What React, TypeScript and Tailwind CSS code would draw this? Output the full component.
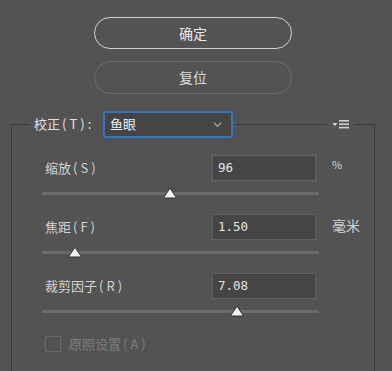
import React from 'react';

const FONT = { fontFamily: '"Noto Sans CJK SC", "Noto Sans", sans-serif' };

const ROWS = [
  { label: '缩放', key: 'S', value: '96', unit: '%', thumb: 170 },
  { label: '焦距', key: 'F', value: '1.50', unit: '毫米', thumb: 75 },
  { label: '裁剪因子', key: 'R', value: '7.08', unit: '', thumb: 237 },
];

// Chinese label + wide-spaced accelerator like "(S)"
const Label: React.FC<{ text: string; k: string; suffix?: string; className?: string }> = ({ text, k, suffix, className }) => (
  <span className={className}>
    {text}
    <span className="ml-[2px] tracking-[3px]">({k})</span>
    {suffix}
  </span>
);

const Slider: React.FC<{ at: number }> = ({ at }) => (
  // track spans x 42..319; at is page x of the thumb centre
  <div className="relative ml-[30px] w-[277px] h-[3px] bg-[#6b6b6b] mt-[11px]">
    <svg
      className="absolute top-[-5px]"
      style={{ left: at - 42 - 7 }}
      width="14"
      height="12"
      viewBox="0 0 14 12"
    >
      <path d="M7 1.2 L12.6 9.5 Q13 11 11.5 11 L2.5 11 Q1 11 1.4 9.5 Z" fill="#f2f2f2" stroke="#2e2e2e" strokeWidth="1" />
    </svg>
  </div>
);

const Row: React.FC<{ label: string; k: string; value: string; unit: string; thumb: number }> = ({ label, k, value, unit, thumb }) => (
  <div className="flex flex-col">
    <div className="flex items-center h-[26px]">
      <Label text={label} k={k} className="w-[200px] pl-[33px] text-[13px] text-[#d4d4d4]" />
      <div className="w-[104px] h-[26px] border border-[#616161] bg-[#454545] flex items-center pl-[5px]">
        <span className="text-[12.5px] text-[#e6e6e6]" style={{ fontFamily: '"DejaVu Sans Mono", monospace' }}>{value}</span>
      </div>
      <span className={`ml-[16px] text-[#d4d4d4] ${unit === '%' ? 'text-[11px] -mt-[8px]' : 'text-[14px] -mt-[3px]'}`}>{unit}</span>
    </div>
    <Slider at={thumb} />
  </div>
);

export default function App() {
  return (
    <div className="w-[392px] h-[371px] bg-[#535353] overflow-hidden flex flex-col" style={FONT}>
      {/* buttons */}
      <div className="flex flex-col ml-[94px] w-[198px] pt-[17px] gap-[12px]">
        <button className="h-[32px] rounded-full border-[1.5px] border-[#cfcfcf] text-[14px] text-[#e8e8e8] flex items-center justify-center">
          确定
        </button>
        <button className="h-[33px] rounded-full border-[1.5px] border-[#6c6c6c] text-[14px] text-[#dcdcdc] flex items-center justify-center">
          复位
        </button>
      </div>

      {/* group header */}
      <div className="flex items-center h-[26px] mt-[17px]">
        <div className="ml-[11px] w-[17px] h-[13px] self-end border-t border-l border-[#3a3a3a]" />
        <Label text="校正" k="T" suffix=":" className="ml-[6px] w-[69px] text-[13px] text-[#e0e0e0] whitespace-nowrap" />
        <div className="w-[130px] h-[27px] rounded-[2px] border-[2px] border-[#3b74b4] bg-[#454545] flex items-center justify-between pl-[5px] pr-[9px] shadow-[0_0_2px_#2f5f99]">
          <span className="text-[13px] text-[#f0f0f0]">鱼眼</span>
          <svg width="9" height="5" viewBox="0 0 9 5">
            <path d="M0.8 0.8 L4.5 4.3 L8.2 0.8" fill="none" stroke="#a8a8a8" strokeWidth="1.2" />
          </svg>
        </div>
        <div className="flex-1 ml-[3px] h-px bg-[#3a3a3a]" />
        <svg className="mx-[5px]" width="18" height="11" viewBox="0 0 18 11">
          <path d="M0.5 4 L5.5 4 L3 7 Z" fill="#d8d8d8" />
          <rect x="7" y="1" width="10" height="1.6" fill="#d0d0d0" />
          <rect x="7" y="4.4" width="10" height="1.6" fill="#d0d0d0" />
          <rect x="7" y="7.8" width="10" height="1.6" fill="#d0d0d0" />
        </svg>
        <div className="w-[20px] h-[13px] self-end border-t border-r border-[#3a3a3a] mr-[17px]" />
      </div>

      {/* group body */}
      <div className="flex-1 ml-[11px] w-[364px] border-l border-r border-[#3a3a3a] pt-[18px] flex flex-col gap-[19px]">
        {ROWS.map(r => (
          <Row key={r.key} label={r.label} k={r.key} value={r.value} unit={r.unit} thumb={r.thumb} />
        ))}
        <div className="flex items-center pl-[33px] mt-[2px]">
          <div className="w-[16px] h-[16px] border border-[#6a6a6a] rounded-[1px]" />
          <Label text="原照设置" k="A" className="ml-[8px] text-[13px] text-[#7c7c7c]" />
        </div>
      </div>
    </div>
  );
}
